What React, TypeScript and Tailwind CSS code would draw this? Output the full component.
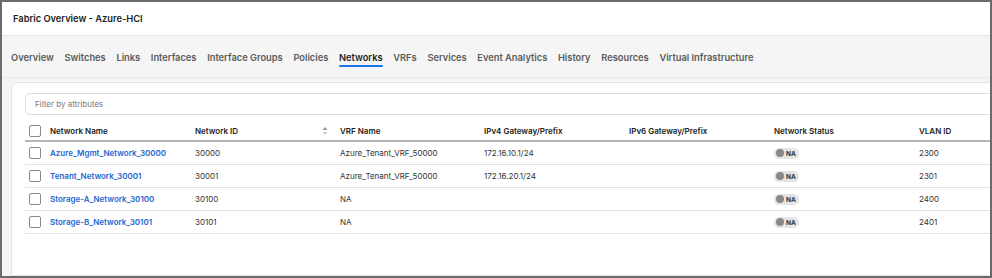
const tabs = [
  'Overview',
  'Switches',
  'Links',
  'Interfaces',
  'Interface Groups',
  'Policies',
  'Networks',
  'VRFs',
  'Services',
  'Event Analytics',
  'History',
  'Resources',
  'Virtual Infrastructure',
]

const rows = [
  { name: 'Azure_Mgmt_Network_30000', id: '30000', vrf: 'Azure_Tenant_VRF_50000', ipv4: '172.16.10.1/24', vlan: '2300' },
  { name: 'Tenant_Network_30001', id: '30001', vrf: 'Azure_Tenant_VRF_50000', ipv4: '172.16.20.1/24', vlan: '2301' },
  { name: 'Storage-A_Network_30100', id: '30100', vrf: 'NA', ipv4: '', vlan: '2400' },
  { name: 'Storage-B_Network_30101', id: '30101', vrf: 'NA', ipv4: '', vlan: '2401' },
]

const cols = 'grid grid-cols-[25px_145px_145px_144px_145px_145px_145px_1fr] items-center'

function Checkbox() {
  return <div className="h-[12px] w-[12px] rounded-[2px] border border-[#8a8a8a] bg-white" />
}

function SortIcon() {
  return (
    <svg width="6" height="10" viewBox="0 0 6 10" className="mr-[12px]">
      <path d="M3 1 L5.5 4 H0.5 Z" fill="#9a9a9a" />
      <path d="M3 9 L5.5 6 H0.5 Z" fill="#cfcfcf" />
    </svg>
  )
}

function StatusPill() {
  return (
    <div className="flex h-[11px] w-[25px] items-center gap-[2px] rounded-full bg-[#e4e4e4] pl-[2px]">
      <div className="h-[8px] w-[8px] shrink-0 rounded-full bg-[#888]" />
      <span className="pt-[1px] text-[6.5px] font-bold leading-[10px] text-[#333]">NA</span>
    </div>
  )
}

export default function App() {
  return (
    <div
      className="flex h-[278px] w-[992px] flex-col overflow-hidden border-2 border-[#6b6b6b] bg-[#f5f5f5]"
      style={{ fontFamily: 'Inter, "Liberation Sans", sans-serif' }}
    >
      <header className="flex h-[34px] shrink-0 items-center border-b border-[#e6e6e6] bg-white pl-[11px]">
        <h1 className="text-[9.3px] font-semibold text-[#222]">Fabric Overview - Azure-HCI</h1>
      </header>

      <nav className="flex h-[42px] shrink-0 items-center gap-[10.7px] border-b border-[#e8e8e8] pl-[9px] pt-[2px]">
        {tabs.map((t) => (
          <div key={t} className="relative flex h-full items-center">
            <span
              className={
                t === 'Networks'
                  ? 'text-[9.3px] font-semibold text-[#1f1f1f]'
                  : 'text-[9.3px] font-semibold text-[#5b5b5b]'
              }
            >
              {t}
            </span>
            {t === 'Networks' && (
              <div className="absolute left-0 right-0 top-[27px] h-[2px] rounded-full bg-[#1a73e8]" />
            )}
          </div>
        ))}
      </nav>

      <div className="ml-[9px] mt-[4px] w-[1000px] flex-1 rounded-t-[6px] border border-[#e3e3e3] bg-white pl-[13px] pt-[10px]">
        <div className="flex h-[22px] items-center rounded-[4px] border border-[#dcdcdc] pl-[9px]">
          <span className="text-[8px] text-[#7a7a7a]">Filter by attributes</span>
        </div>

        <div className={`${cols} mt-[5px] h-[22px] border-b-2 border-[#b5b5b5] pt-[1px] text-[8px] font-semibold text-[#222]`}>
          <div className="pl-[4px]">
            <Checkbox />
          </div>
          <div>Network Name</div>
          <div className="flex items-center justify-between">
            <span>Network ID</span>
            <SortIcon />
          </div>
          <div>VRF Name</div>
          <div>IPv4 Gateway/Prefix</div>
          <div>IPv6 Gateway/Prefix</div>
          <div>Network Status</div>
          <div>VLAN ID</div>
        </div>

        {rows.map((r) => (
          <div key={r.name} className={`${cols} h-[23px] border-b border-[#e2e2e2] text-[8px] text-[#333]`}>
            <div className="pl-[4px]">
              <Checkbox />
            </div>
            <div className="font-semibold text-[#2466cf]">{r.name}</div>
            <div>{r.id}</div>
            <div>{r.vrf}</div>
            <div>{r.ipv4}</div>
            <div />
            <div>
              <StatusPill />
            </div>
            <div>{r.vlan}</div>
          </div>
        ))}
      </div>
    </div>
  )
}
